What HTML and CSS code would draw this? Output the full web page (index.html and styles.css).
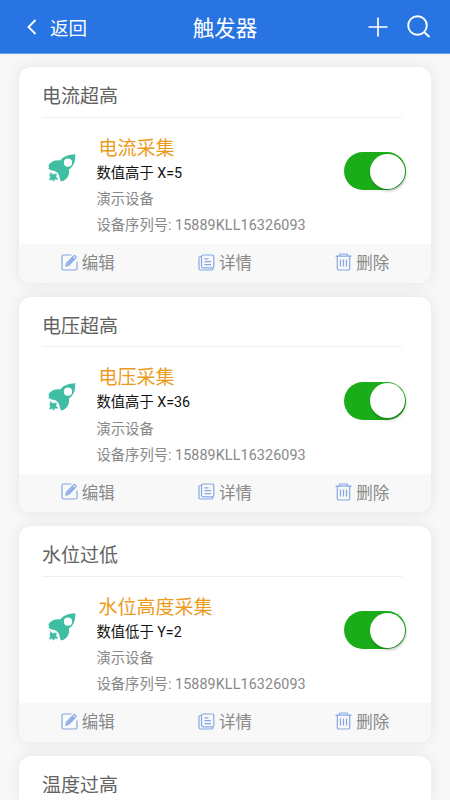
FILE: index.html
```
<!DOCTYPE html>
<html lang="zh-CN">
<head>
<meta charset="utf-8">
<title>触发器</title>
<link rel="stylesheet" href="styles.css">
</head>
<body>
<svg class="sprite" aria-hidden="true">
  <symbol id="rocket" viewBox="0 0 28 28">
    <path d="M27.3.3C20 .4 15.600 2.500 12.200 6.500C8 5.800 4 7 1.200 10.300C.3 11.400.4 12.300 1.200 13.200L.2 14.600L3.500 16.600C8 16.500 11.500 20 11.700 24L12.800 27.600L15.600 26.800C20 24.500 21.500 21 21 15.600C25.800 12.200 27.500 7.500 27.300.3ZM20 4.600a4.100 4.100 0 1 1 0 8.200a4.100 4.100 0 0 1 0-8.200Z" fill-rule="evenodd"/>
    <path d="M2.400 18.500L4.600 20.400L8.400 20L7.800 22.800L9.900 25.200L6.900 25.100L5.500 27.300L4.500 25.600L1.300 26L2.600 23.200L1.500 21.200L2.600 20.600Z" stroke="#3fbea3" stroke-width=".6"/>
  </symbol>
  <symbol id="edit" viewBox="0 0 17 17">
    <path d="M10.500 1H2.500Q1 1 1 2.500V14.500Q1 16 2.500 16H14.500Q16 16 16 14.500V7.500M5 12L5.700 9L12.700 2Q13.500 1.200 14.500 2.100Q15.600 3.100 14.700 4L7.800 11.100ZM6.500 10.500L12.800 4"/>
  </symbol>
  <symbol id="detail" viewBox="0 0 17 17">
    <path d="M5 1H14.300Q15.800 1 15.800 2.500V12.300Q15.800 13.800 14.300 13.800H5Q3.500 13.800 3.500 12.300V2.500Q3.500 1 5 1ZM3.500 2.500H2.300Q1 2.500 1 4V14.500Q1 16 2.500 16H13.500Q15 16 15 14M6.500 4.800H10.500M6.500 7.700H13M6.500 10.600H13"/>
  </symbol>
  <symbol id="trash" viewBox="0 0 17 18">
    <path d="M.5 3.200H16.500M4.500 3V1.800Q4.500 1 5.300 1H11.700Q12.500 1 12.500 1.800V3M2.300 3.500V15.700Q2.300 17 3.600 17H13.400Q14.700 17 14.700 15.700V3.500M5.500 6.500V13.500M8.500 6.500V13.500M11.500 6.500V13.500"/>
  </symbol>
</svg>

<header class="navbar">
  <div class="back">
    <svg class="chevron" viewBox="0 0 10 16"><path d="M8.500 1L1.500 8L8.500 15"/></svg>
    <span>返回</span>
  </div>
  <h1 class="heading">触发器</h1>
  <div class="tools">
    <svg class="plus" viewBox="0 0 20 20"><path d="M10 .5V19.500M.5 10H19.500"/></svg>
    <svg class="search" viewBox="0 0 24 24"><circle cx="10.500" cy="10.500" r="9.300"/><path d="M17 17L22.500 22"/></svg>
  </div>
</header>

<main class="list">
  <section class="card">
    <h2 class="card-title">电流超高</h2>
    <div class="card-body">
      <svg class="rocket"><use href="#rocket"/></svg>
      <div class="info">
        <p class="name">电流采集</p>
        <p class="rule">数值高于 X=5</p>
        <p class="meta">演示设备</p>
        <p class="meta">设备序列号: <span class="serial">15889KLL16326093</span></p>
      </div>
      <span class="switch"></span>
    </div>
    <footer class="actions">
      <span class="action"><svg class="icon"><use href="#edit"/></svg>编辑</span>
      <span class="action"><svg class="icon"><use href="#detail"/></svg>详情</span>
      <span class="action"><svg class="icon trash"><use href="#trash"/></svg>删除</span>
    </footer>
  </section>

  <section class="card">
    <h2 class="card-title">电压超高</h2>
    <div class="card-body">
      <svg class="rocket"><use href="#rocket"/></svg>
      <div class="info">
        <p class="name">电压采集</p>
        <p class="rule">数值高于 X=36</p>
        <p class="meta">演示设备</p>
        <p class="meta">设备序列号: <span class="serial">15889KLL16326093</span></p>
      </div>
      <span class="switch"></span>
    </div>
    <footer class="actions">
      <span class="action"><svg class="icon"><use href="#edit"/></svg>编辑</span>
      <span class="action"><svg class="icon"><use href="#detail"/></svg>详情</span>
      <span class="action"><svg class="icon trash"><use href="#trash"/></svg>删除</span>
    </footer>
  </section>

  <section class="card">
    <h2 class="card-title">水位过低</h2>
    <div class="card-body">
      <svg class="rocket"><use href="#rocket"/></svg>
      <div class="info">
        <p class="name">水位高度采集</p>
        <p class="rule">数值低于 Y=2</p>
        <p class="meta">演示设备</p>
        <p class="meta">设备序列号: <span class="serial">15889KLL16326093</span></p>
      </div>
      <span class="switch"></span>
    </div>
    <footer class="actions">
      <span class="action"><svg class="icon"><use href="#edit"/></svg>编辑</span>
      <span class="action"><svg class="icon"><use href="#detail"/></svg>详情</span>
      <span class="action"><svg class="icon trash"><use href="#trash"/></svg>删除</span>
    </footer>
  </section>

  <section class="card card-last">
    <h2 class="card-title">温度过高</h2>
  </section>
</main>
</body>
</html>
```
FILE: styles.css
```
* {
  box-sizing: border-box;
  margin: 0;
  padding: 0;
}

body {
  height: 800px;
  overflow: hidden;
  background: #f8f8f8;
  font-family: Roboto, "Noto Sans CJK SC", sans-serif;
}

svg {
  flex: none;
  display: block;
}

.sprite {
  display: none;
}

.navbar {
  display: grid;
  grid-template-columns: 1fr auto 1fr;
  align-items: center;
  height: 54px;
  padding: 0 19px 0 27px;
  border-bottom: 1px solid #6b9fec;
  background: #2874e2;
  color: #fff;
}

.navbar svg {
  fill: none;
  stroke: #fff;
}

.back {
  display: flex;
  align-items: center;
  gap: 13px;
  font-size: 18.5px;
}

.chevron {
  width: 10px;
  height: 16px;
  stroke-width: 1.8;
}

.heading {
  margin-left: -8px;
  padding-bottom: 1px;
  font-size: 21.5px;
  font-weight: 400;
}

.tools {
  display: flex;
  justify-content: flex-end;
  align-items: center;
  gap: 19px;
}

.plus {
  width: 20px;
  height: 20px;
  stroke-width: 1.7;
}

.search {
  width: 24px;
  height: 24px;
  stroke-width: 1.9;
}

.list {
  display: flex;
  flex-direction: column;
  gap: 14px;
  height: 746px;
  padding: 13px 19px 0;
}

.card {
  flex: none;
  height: 215.5px;
  border-radius: 12px;
  background: #fff;
  box-shadow: 0 0 14px rgba(70, 45, 30, 0.1);
  overflow: hidden;
}

.card-last {
  flex: 1 1 0;
  height: auto;
  border-radius: 12px 12px 0 0;
}

.card-title {
  height: 50.5px;
  margin: 0 29px 0 23px;
  border-bottom: 1px solid #efefef;
  color: #626262;
  font-size: 19px;
  font-weight: 400;
  line-height: 60px;
}

.card-last .card-title {
  height: auto;
  border: 0;
  max-height: 44px;
  overflow: hidden;
}

.card-body {
  display: flex;
  align-items: flex-start;
  height: 126.5px;
  padding: 16px 25px 0 29px;
}

.rocket {
  width: 28px;
  height: 28px;
  margin-top: 20px;
  fill: #3fbea3;
}

.info {
  flex: 1;
  padding-left: 20.5px;
  font-size: 14.3px;
}

.name {
  padding-left: 2px;
  color: #eb9b1b;
  font-size: 19px;
  line-height: 29px;
}

.rule {
  margin-top: -2px;
  color: #111;
  line-height: 25px;
}

.meta {
  color: #888;
  line-height: 26px;
}

.rule + .meta {
  padding-top: 0.5px;
}

.serial {
  letter-spacing: 0.12px;
}

.switch {
  width: 62px;
  height: 38px;
  margin-top: 18.5px;
  padding: 1.5px;
  border-radius: 19px;
  background: #1aad19;
}

.switch::after {
  content: "";
  display: block;
  width: 35px;
  height: 35px;
  margin-left: auto;
  border-radius: 50%;
  background: #fff;
  box-shadow: 1px 2px 3px rgba(0, 0, 0, 0.25);
}

.actions {
  display: grid;
  grid-template-columns: repeat(3, 1fr);
  height: 38.5px;
  padding-bottom: 2px;
  background: #f8f8f8;
  color: #898989;
  font-size: 16.5px;
}

.action {
  display: flex;
  justify-content: center;
  align-items: center;
  gap: 4px;
}

.icon {
  width: 17px;
  height: 17px;
  fill: none;
  stroke: #85a8e5;
  stroke-width: 1.2;
}

.trash {
  height: 18px;
}
```
